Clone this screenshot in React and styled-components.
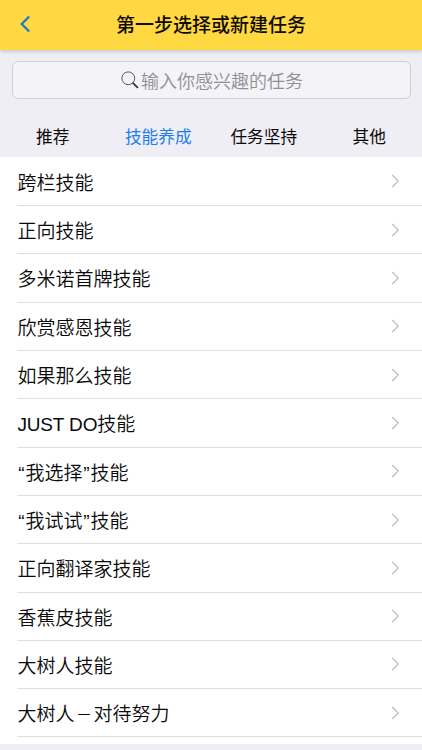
import * as React from "react"
import styled, { createGlobalStyle } from "styled-components"

const GlobalStyle = createGlobalStyle`
  * {
    box-sizing: border-box;
  }
  body {
    margin: 0;
    background: #efeef4;
    color: #0a0a0a;
    font-family: "Liberation Sans", "Noto Sans CJK SC", sans-serif;
  }
`

const Page = styled.div`
  height: 750px;
  display: flex;
  flex-direction: column;
  overflow: hidden;
`

const Header = styled.header`
  flex: none;
  display: grid;
  grid-template-columns: 50px 1fr 50px;
  align-items: center;
  height: 50px;
  background: #ffd842;
  box-shadow: 0 1px 4px rgba(0, 0, 0, 0.22);
`

const BackButton = styled.button`
  display: flex;
  height: 50px;
  padding: 15px 0 0 19px;
  border: 0;
  background: none;
`

const Title = styled.h1`
  margin: 0;
  padding-top: 2px;
  font-size: 19px;
  line-height: 48px;
  font-weight: 500;
  text-align: center;
  color: #0d0b03;
`

const SearchBox = styled.div`
  flex: none;
  display: flex;
  justify-content: center;
  align-items: center;
  gap: 2px;
  height: 38px;
  margin: 11px 11px 0 12px;
  padding: 0 0 1px 1px;
  border: 1px solid #d0d0d4;
  border-radius: 6px;
  background: #f4f3f8;
  color: #909094;
  font-size: 18px;
  font-weight: 350;
`

const Tabs = styled.nav`
  flex: none;
  display: grid;
  grid-template-columns: repeat(4, 1fr);
  height: 58px;
`

const Tab = styled.div`
  font-size: 16.7px;
  line-height: 24px;
  padding-top: 27px;
  text-align: center;
  color: ${({ $active }) => ($active ? "#1b7ff0" : "#0a0a0a")};
`

const List = styled.ul`
  flex: none;
  height: 587px;
  margin: 0;
  padding: 0.7px 0 0 17px;
  list-style: none;
  background: #fff;
`

const Row = styled.li`
  display: flex;
  justify-content: space-between;
  align-items: center;
  height: 48.32px;
  padding-right: 22px;
  border-bottom: 1px solid #dedee0;
  font-size: 19px;
  font-weight: 350;
`

const Name = styled.span`
  line-height: 28px;
  margin: 5px 0 0 0.4px;
`

const Quote = styled.span`
  display: inline-block;
  width: 8px;
  text-align: center;
`

const Dash = styled.span`
  display: inline-block;
  width: 19px;
  font-size: 16px;
  line-height: 1;
  text-align: center;
  vertical-align: 1px;
`

const Latin = styled.span`
  letter-spacing: -0.15px;
`

const tabs = ["推荐", "技能养成", "任务坚持", "其他"]

const skills = [
  "跨栏技能",
  "正向技能",
  "多米诺首牌技能",
  "欣赏感恩技能",
  "如果那么技能",
  "JUST DO技能",
  "“我选择”技能",
  "“我试试”技能",
  "正向翻译家技能",
  "香蕉皮技能",
  "大树人技能",
  "大树人－对待努力",
]

const BackIcon = () => (
  <svg width="12" height="18" viewBox="0 0 12 18" fill="none">
    <path d="M10.2 1.5L2.7 9l7.5 7.5" stroke="#1c7fc6" strokeWidth="2.3" />
  </svg>
)

const SearchIcon = () => (
  <svg width="18" height="18" viewBox="0 0 18 18" fill="none">
    <circle cx="7.3" cy="7.3" r="6.4" stroke="#58585c" strokeWidth="1" />
    <path d="M11.8 11.8l5.1 5" stroke="#303034" strokeWidth="1.8" />
  </svg>
)

const ArrowIcon = () => (
  <svg width="9" height="14" viewBox="0 0 9 14" fill="none">
    <path d="M1.2 1l6 6-6 6" stroke="#bdbdc1" strokeWidth="1.2" />
  </svg>
)

// punctuation gets a fixed width so it sits evenly beside the Chinese glyphs
const renderPart = (part, i) => {
  if (part === "“" || part === "”") return <Quote key={i}>{part}</Quote>
  if (part === "－") return <Dash key={i}>{part}</Dash>
  if (/^[A-Z ]+$/.test(part)) return <Latin key={i}>{part}</Latin>
  return part
}

const SkillName = ({ name }) => (
  <Name>{name.split(/([“”－]|[A-Z ]+)/).map(renderPart)}</Name>
)

const App = () => {
  const [active, setActive] = React.useState(1)

  return (
    <Page>
      <GlobalStyle />
      <Header>
        <BackButton aria-label="返回">
          <BackIcon />
        </BackButton>
        <Title>第一步选择或新建任务</Title>
      </Header>
      <SearchBox>
        <SearchIcon />
        <span>输入你感兴趣的任务</span>
      </SearchBox>
      <Tabs>
        {tabs.map((tab, i) => (
          <Tab key={tab} $active={i === active} onClick={() => setActive(i)}>
            {tab}
          </Tab>
        ))}
      </Tabs>
      <List>
        {skills.map((skill) => (
          <Row key={skill}>
            <SkillName name={skill} />
            <ArrowIcon />
          </Row>
        ))}
      </List>
    </Page>
  )
}

export default App
